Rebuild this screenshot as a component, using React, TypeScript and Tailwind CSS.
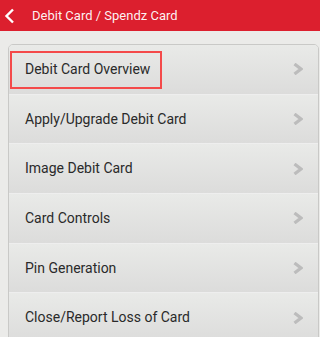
import React from "react";

const items = [
  "Debit Card Overview",
  "Apply/Upgrade Debit Card",
  "Image Debit Card",
  "Card Controls",
  "Pin Generation",
  "Close/Report Loss of Card",
];

function Chevron() {
  return (
    <svg width="10" height="12" viewBox="0 0 10 12" className="shrink-0">
      <path d="M1.5 1 L8 6 L1.5 11" fill="none" stroke="#bcbcbc" strokeWidth="3.2" strokeLinejoin="miter" />
    </svg>
  );
}

export default function App() {
  return (
    <div className="relative w-full h-[337px] overflow-hidden bg-[#ebebe9]" style={{ fontFamily: "Roboto, 'Liberation Sans', sans-serif" }}>
      <div className="h-[31px] bg-[#dc1f2e] flex items-center">
        <svg width="12" height="16" viewBox="0 0 12 16" className="ml-[4px]">
          <path d="M9 1.5 L2.5 8 L9 14.5" fill="none" stroke="#ffffff" strokeWidth="2.4" />
        </svg>
        <span className="ml-[16px] text-[13px] text-white/95">Debit Card / Spendz Card</span>
      </div>
      <div className="pt-[13px] pl-[8px] pr-[1px]">
        <div className="rounded-t-[5px] border border-[#c9c9c7] overflow-hidden">
          {items.map((t) => (
            <div
              key={t}
              className="h-[49.7px] flex items-center justify-between pl-[16px] pr-[15px] bg-gradient-to-b from-[#e9eae8] to-[#dcdcdb] border-b border-[#eeeeee]"
            >
              <span className="text-[14px] text-[#2a2a2a]">{t}</span>
              <Chevron />
            </div>
          ))}
        </div>
      </div>
      <div className="absolute left-[10px] top-[51px] w-[152px] h-[38px] border-2 border-[#f44a4a]" />
    </div>
  );
}
